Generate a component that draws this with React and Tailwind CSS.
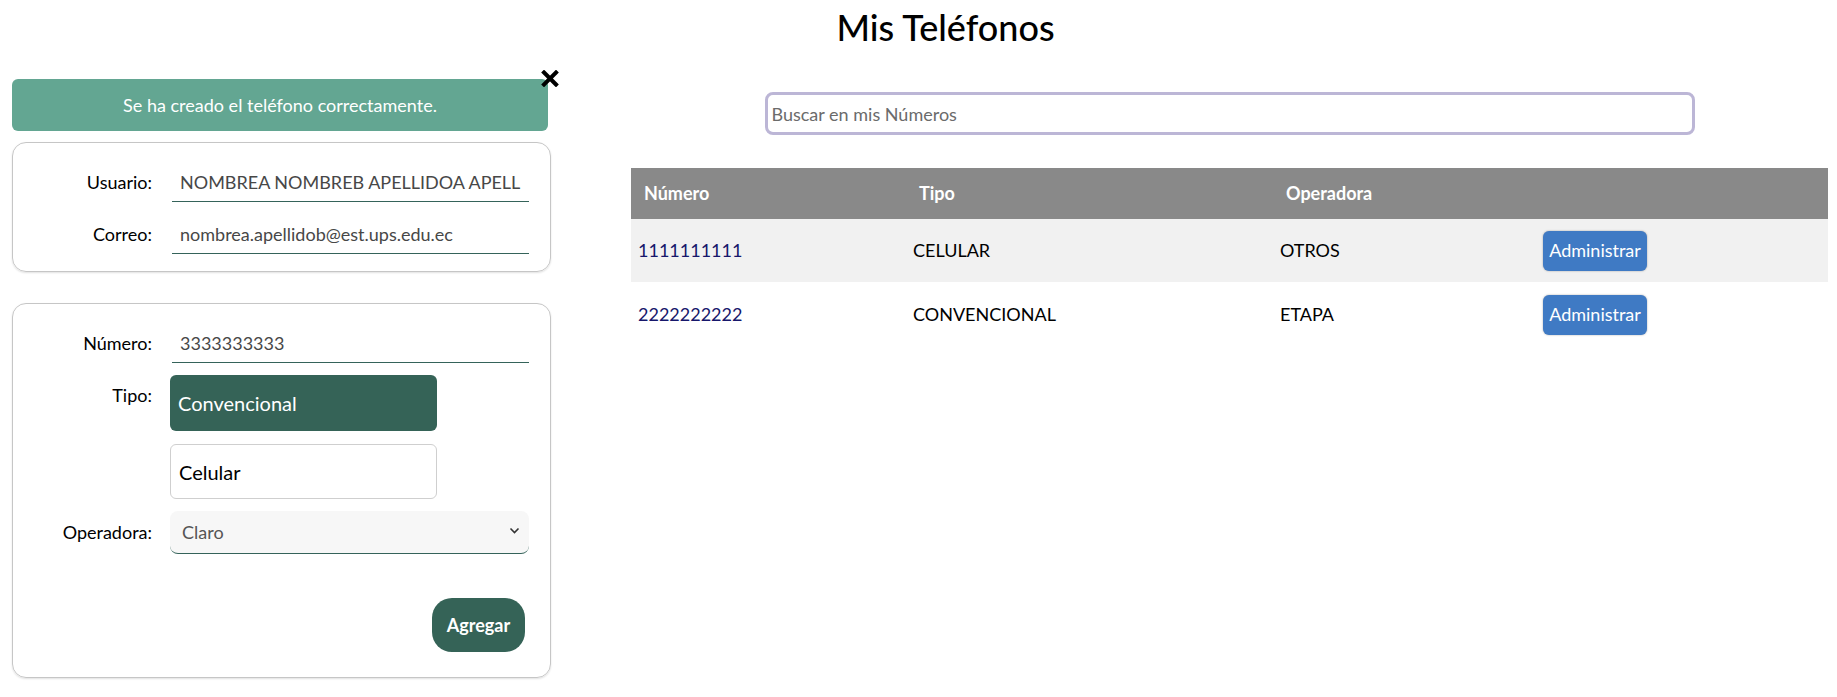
import { useState } from "react";

const phones = [
  { numero: "1111111111", tipo: "CELULAR", operadora: "OTROS" },
  { numero: "2222222222", tipo: "CONVENCIONAL", operadora: "ETAPA" },
];

const Field = ({ label, value }) => (
  <div className="flex items-center">
    <label className="w-[139px] text-right text-[18px] text-black">{label}</label>
    <input
      readOnly
      value={value}
      className="ml-[20px] h-[40px] w-[357px] border-b-[1.5px] border-[#35635a] px-2 text-[18px] text-[#474747] outline-none"
    />
  </div>
);

const App = () => {
  const [tipo, setTipo] = useState("Convencional");
  const [search, setSearch] = useState("");

  return (
    <div className="min-h-[697px] bg-white font-['Lato',sans-serif] text-black">
      <h1 className="pl-[54px] pt-[5px] text-center text-[36px] font-medium leading-[45px]">
        Mis Teléfonos
      </h1>

      <div className="flex gap-[80px] pl-3 pr-[9px]">
        {/* left column: alert + user data + form */}
        <div className="w-[539px] shrink-0">
          <div className="relative mt-[29px] flex h-[52px] w-[536px] items-center justify-center rounded-md bg-[#63a692] text-[18px] text-white">
            Se ha creado el teléfono correctamente.
            <button className="absolute -right-[11px] -top-[9px]">
              <svg width="18" height="17" viewBox="0 0 18 17">
                <path d="M3 2.5 L15 14.5 M15 2.5 L3 14.5" stroke="#000" strokeWidth="4" strokeLinecap="square" />
              </svg>
            </button>
          </div>

          <div className="mt-[11px] rounded-[14px] border border-[#c6c6c6] pb-[17px] pt-[19px] shadow-[0_1px_2px_rgba(0,0,0,0.12)]">
            <div className="flex flex-col gap-[12px]">
              <Field label="Usuario:" value="NOMBREA NOMBREB APELLIDOA APELLIDOB" />
              <Field label="Correo:" value="nombrea.apellidob@est.ups.edu.ec" />
            </div>
          </div>

          <div className="mt-[31px] rounded-[14px] border border-[#c6c6c6] pb-[25px] pt-[19px] shadow-[0_1px_2px_rgba(0,0,0,0.12)]">
            <Field label="Número:" value="3333333333" />

            <div className="mt-[12px] flex items-start">
              <label className="w-[139px] pt-[7px] text-right text-[18px]">Tipo:</label>
              <div className="ml-[18px] flex flex-col gap-[13px]">
                {["Convencional", "Celular"].map((t) => (
                  <button
                    key={t}
                    onClick={() => setTipo(t)}
                    className={
                      tipo === t
                        ? "h-[56px] w-[267px] rounded-md bg-[#356357] pl-2 text-left text-[20px] text-white"
                        : "h-[55px] w-[267px] rounded-md border border-[#cfcfcf] bg-white pl-2 text-left text-[20px] text-black"
                    }
                  >
                    {t}
                  </button>
                ))}
              </div>
            </div>

            <div className="mt-[12px] flex items-center">
              <label className="w-[139px] text-right text-[18px]">Operadora:</label>
              <div className="relative ml-[18px] w-[359px]">
                <select className="h-[43px] w-full appearance-none rounded-lg border-b-[1.5px] border-[#35635a] bg-[#f7f7f7] pl-3 text-[18px] text-[#555] outline-none">
                  <option>Claro</option>
                  <option>Movistar</option>
                  <option>CNT</option>
                  <option>Etapa</option>
                  <option>Otros</option>
                </select>
                <svg className="pointer-events-none absolute right-[9px] top-[16px]" width="11" height="8" viewBox="0 0 11 8">
                  <path d="M1.5 1.5 L5.5 5.5 L9.5 1.5" fill="none" stroke="#333" strokeWidth="1.6" />
                </svg>
              </div>
            </div>

            <div className="mt-[44px] flex justify-end pr-[25px]">
              <button className="h-[54px] w-[93px] rounded-[20px] bg-[#356357] text-[18px] font-bold text-white">
                Agregar
              </button>
            </div>
          </div>
        </div>

        {/* right column: search + table */}
        <div className="flex-1">
          <input
            value={search}
            onChange={(e) => setSearch(e.target.value)}
            placeholder="Buscar en mis Números"
            className="mx-auto mt-[42px] block h-[43px] w-[930px] rounded-lg border-[3px] border-[#bcb6d6] px-1 text-[18px] placeholder-[#6b6b6b] outline-none"
          />

          <table className="mt-[33px] w-full table-fixed border-collapse text-left text-[18px]">
            <thead>
              <tr className="h-[51px] bg-[#898989] text-white">
                <th className="w-[275px] pl-[13px] font-bold">Número</th>
                <th className="w-[367px] pl-[13px] font-bold">Tipo</th>
                <th className="w-[263px] pl-[13px] font-bold">Operadora</th>
                <th></th>
              </tr>
            </thead>
            <tbody>
              {phones
                .filter((p) => p.numero.includes(search))
                .map((p, i) => (
                  <tr key={p.numero} className={i % 2 === 0 ? "h-[63px] bg-[#f1f1f1]" : "h-[65px] bg-white"}>
                    <td className="pl-[7px] text-[#17176b]">{p.numero}</td>
                    <td className="pl-[7px]">{p.tipo}</td>
                    <td className="pl-[7px]">{p.operadora}</td>
                    <td className="pl-[7px]">
                      <button className="h-[40px] w-[104px] rounded-md bg-[#3f7ac4] text-[18px] text-white shadow-[0_0_2px_rgba(0,0,0,0.35)]">
                        Administrar
                      </button>
                    </td>
                  </tr>
                ))}
            </tbody>
          </table>
        </div>
      </div>
    </div>
  );
};

export default App;
